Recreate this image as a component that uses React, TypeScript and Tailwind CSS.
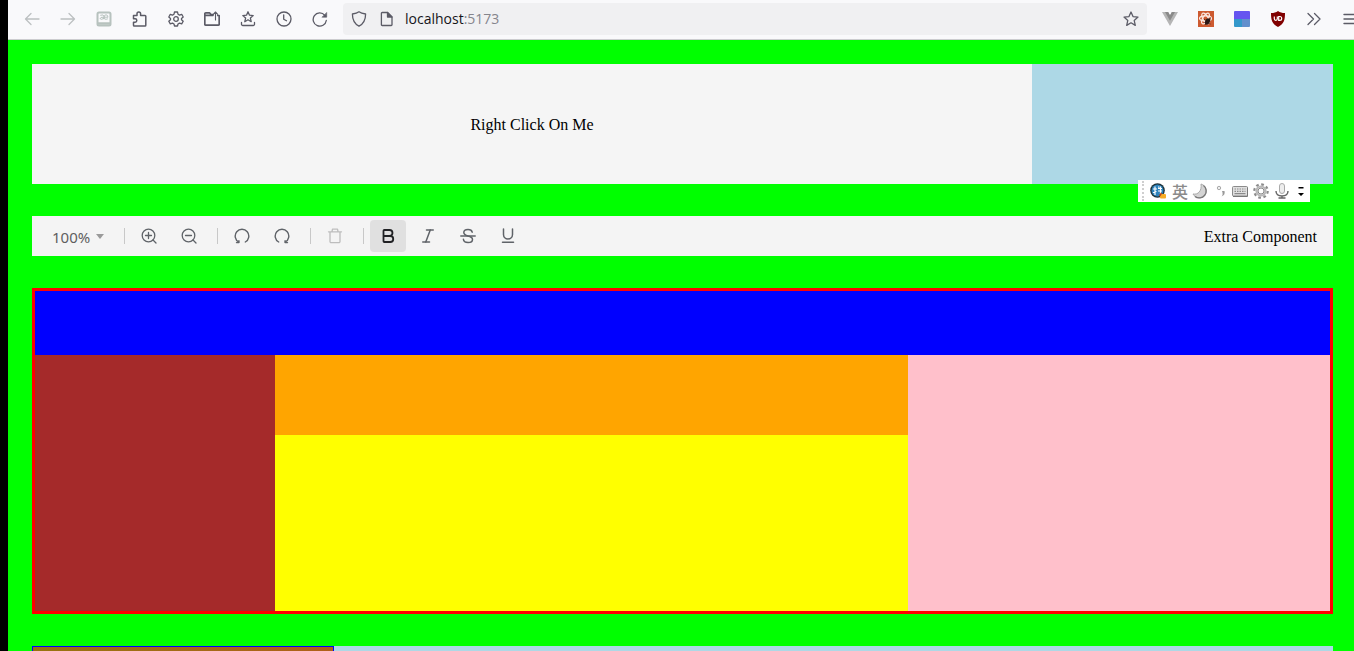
import type { ReactNode } from "react";
import { Bold, Italic } from "lucide-react";

type IconProps = { children: ReactNode; width?: number };

function Icon({ children, width = 1.3 }: IconProps) {
  return (
    <svg
      viewBox="0 0 16 16"
      className="size-4"
      fill="none"
      stroke="currentColor"
      strokeWidth={width}
      strokeLinecap="round"
      strokeLinejoin="round"
      aria-hidden="true"
    >
      {children}
    </svg>
  );
}

const star = "M8 1l2 4.6 5 .5-3.8 3.3 1.1 5L8 11.8l-4.3 2.6 1.1-5L1 6.1l5-.5z";

function NavButton({ label, muted = false, children }: { label: string; muted?: boolean; children: ReactNode }) {
  return (
    <button
      type="button"
      aria-label={label}
      className={`flex h-8 w-9 shrink-0 items-center justify-center ${muted ? "text-[#bcc0c1]" : "text-[#5b5b66]"}`}
    >
      {children}
    </button>
  );
}

function BrowserBar() {
  return (
    <header className="flex h-10 shrink-0 items-start border-b border-[#cccccf] bg-[#f9f9fb] pt-[3px] pl-1.5">
      <NavButton label="Back" muted>
        <Icon><path d="M15 8H1.500M7 2.500L1.500 8 7 13.500" /></Icon>
      </NavButton>
      <NavButton label="Forward" muted>
        <Icon><path d="M1 8h13.500M9 2.500L14.500 8 9 13.500" /></Icon>
      </NavButton>
      <NavButton label="Dictionary" muted>
        <svg viewBox="0 0 16 16" className="size-4" fill="none" stroke="#b7c2be" aria-hidden="true">
          <rect x="1.5" y="1.5" width="13" height="13" rx="1.5" strokeWidth="2" />
          <path d="M2 12.500h12" strokeWidth="2.500" />
          <path d="M4.300 4.300q3.400-1.200 3.700 1v3M8 6.200q-4-.2-4 1.300 1 1.800 4-.2M8 6.200h4q-.2-2.400-2-2.400T8 6.200q.3 3 3.800 1.600" strokeWidth="1" />
        </svg>
      </NavButton>
      <NavButton label="Extensions">
        <Icon width={1.5}>
          <path d="M1.500 4.500H5V2.800a1.800 1.800 0 013.600 0v1.700H13a.8.8 0 01.8.8v8.900a.8.8 0 01-.8.8H2.300a.8.8 0 01-.8-.8v-3h1.600a1.700 1.700 0 000-3.400H1.500z" />
        </Icon>
      </NavButton>
      <NavButton label="Settings">
        <Icon>
          <path d="M6.500 1h3l.5 2.200 1.500.9 2.200-.8 1.500 2.700-1.700 1.500v1.200l1.700 1.500-1.500 2.700-2.200-.8-1.500.9-.5 2h-3L6 13l-1.500-.9-2.200.8L.8 10.200l1.700-1.500V7.500L.8 6l1.500-2.700 2.200.8L6 3.200z" />
          <circle cx="8" cy="8" r="2.300" />
        </Icon>
      </NavButton>
      <NavButton label="Open file">
        <Icon width={1.7}>
          <path d="M9 3.500H7L5.500 1.800H1.800a1 1 0 00-1 1v10.400a1 1 0 001 1h12.400a1 1 0 001-1V4.500h-1.400M1 4.300h8" />
          <path d="M11.500 9V1M9.300 3.300L11.500 1l2.200 2.300" strokeWidth="1.1" />
        </Icon>
      </NavButton>
      <NavButton label="Bookmarks">
        <Icon>
          <path d="M8 .8l1.500 3.400 3.700.4-2.800 2.500.8 3.600L8 8.800l-3.200 1.900.8-3.600-2.800-2.500 3.700-.4z" />
          <path d="M1.500 11.500v1.700a1.300 1.300 0 001.300 1.300h10.400a1.300 1.300 0 001.300-1.300v-1.700" />
        </Icon>
      </NavButton>
      <NavButton label="History">
        <Icon><circle cx="8" cy="8" r="7" /><path d="M7.700 3.800v4.400l2.800 1.600" /></Icon>
      </NavButton>
      <NavButton label="Reload">
        <Icon>
          <path d="M14.300 9.500A6.600 6.600 0 1112.800 4.300" />
          <path d="M14.700 1.800v4.400h-4.400z" fill="currentColor" strokeWidth=".6" />
        </Icon>
      </NavButton>
      <div className="ml-[5px] flex h-8 min-w-0 flex-1 items-center rounded bg-[#f0f0f2] pl-2 text-[#5b5b66]">
        <Icon><path d="M8 .8c2 1.500 4.300 1.900 6.600 2.200 0 5.500-1.800 9.700-6.600 12.200C3.200 12.700 1.400 8.500 1.400 3 3.700 2.700 6 2.300 8 .8z" /></Icon>
        <span className="ml-3">
          <Icon>
            <path d="M3.200 1.500h5.300l4.500 4.500v7.700a.8.8 0 01-.8.8h-9a.8.8 0 01-.8-.8V2.300a.8.8 0 01.8-.8z" />
            <path d="M8.500 1.500V6H13z" fill="currentColor" />
          </Icon>
        </span>
        <a href="#" className="ml-2.5 font-['Open_Sans',sans-serif] text-sm text-[#15141a]">
          localhost<span className="text-[#85858c]">:5173</span>
        </a>
        <button type="button" aria-label="Bookmark this page" className="ml-auto flex size-8 items-center justify-center">
          <Icon><path d={star} /></Icon>
        </button>
      </div>
      <div className="-mr-[14px] ml-[5px] flex shrink-0">
        <NavButton label="Vue devtools">
          <svg viewBox="0 0 16 16" className="size-4" aria-hidden="true">
            <path d="M0 1h6l2 3.500L10 1h6L8 15z" fill="#b5b5b5" />
            <path d="M3 1h3.200L8 4.200 9.800 1H13L8 9.700z" fill="#8a8a8a" />
          </svg>
        </NavButton>
        <NavButton label="React devtools">
          <svg viewBox="0 0 16 16" className="size-4" aria-hidden="true">
            <path d="M0 0h16v16H0z" fill="#cd5a30" />
            <g fill="none" stroke="#fbe9e2" strokeWidth="1.2">
              <ellipse cx="7.5" cy="7.5" rx="6" ry="2.6" />
              <ellipse cx="7.5" cy="7.5" rx="6" ry="2.6" transform="rotate(60 7.5 7.5)" />
              <ellipse cx="7.5" cy="7.5" rx="6" ry="2.6" transform="rotate(120 7.5 7.5)" />
            </g>
            <ellipse cx="9.5" cy="10.5" rx="2.3" ry="3.4" fill="#2a1714" transform="rotate(25 9.5 10.5)" />
            <path d="M6 8l6.500 5M12.500 6.500L7 14M6.500 11.500l6-2.500" stroke="#2a1714" strokeWidth=".7" />
          </svg>
        </NavButton>
        <NavButton label="Color tools">
          <svg viewBox="0 0 16 16" className="size-4" aria-hidden="true">
            <path d="M1 0h14a1 1 0 011 1v7H0V1a1 1 0 011-1z" fill="#6554f0" />
            <path d="M0 8h8v8H1a1 1 0 01-1-1z" fill="#3498cb" />
            <path d="M8 8h8v7a1 1 0 01-1 1H8z" fill="#628fcd" />
          </svg>
        </NavButton>
        <NavButton label="Content blocker">
          <svg viewBox="0 0 16 16" className="size-4" aria-hidden="true">
            <path d="M8 0c2 1.500 4 2 7 2 0 7-1 11-7 14C2 13 1 9 1 2c3 0 5-.5 7-2z" fill="#800000" />
            <path d="M4.300 5.500v2.300a1.500 1.500 0 003 0V5.500M8.700 5.500v3.800h1.100a1.900 1.900 0 000-3.800z" fill="none" stroke="#fff" strokeWidth="1.2" />
          </svg>
        </NavButton>
        <NavButton label="More tools">
          <Icon><path d="M2 2.500L7.500 8 2 13.500M8.500 2.500L14 8l-5.500 5.500" /></Icon>
        </NavButton>
        <NavButton label="Menu">
          <Icon width={1.4}><path d="M2 3.500h12M2 8h12M2 12.500h12" /></Icon>
        </NavButton>
      </div>
    </header>
  );
}

function ToolButton({ label, state = "normal", children }: { label: string; state?: "normal" | "active" | "disabled"; children: ReactNode }) {
  const tone = {
    normal: "text-[#5f6368]",
    active: "bg-[#e0e0e0] text-[#202124]",
    disabled: "text-[#bdbdbd]",
  }[state];
  return (
    <button
      type="button"
      aria-label={label}
      aria-pressed={state === "active"}
      disabled={state === "disabled"}
      className={`mr-1 flex h-8 w-9 shrink-0 items-center justify-center rounded-sm ${tone}`}
    >
      {children}
    </button>
  );
}

function Divider() {
  return <span className="mx-1.5 h-4 w-px shrink-0 bg-[#c8c8c8]" />;
}

function Toolbar() {
  return (
    <div role="toolbar" aria-label="Editor tools" className="mt-8 flex h-10 items-center bg-[#f4f4f4] pr-4 pl-3">
      <button type="button" className="mr-1 flex h-8 w-[70px] items-center gap-1.5 px-2 font-['Noto_Sans',sans-serif] text-[15px] text-[#5f5f5f]">
        <span className="pt-0.5">100%</span>
        <svg viewBox="0 0 8 5" className="h-[5px] w-2 shrink-0" aria-hidden="true">
          <path d="M0 0h8L4 5z" fill="#9a9a9a" />
        </svg>
      </button>
      <Divider />
      <ToolButton label="Zoom in">
        <Icon><circle cx="7.5" cy="7.5" r="6.3" /><path d="M12 12l3 3M4.500 7.500h6M7.500 4.500v6" /></Icon>
      </ToolButton>
      <ToolButton label="Zoom out">
        <Icon><circle cx="7.5" cy="7.5" r="6.3" /><path d="M12 12l3 3M4.500 7.500h6" /></Icon>
      </ToolButton>
      <Divider />
      <ToolButton label="Undo">
        <Icon width={1.4}><path d="M11.300 14A6.800 6.800 0 10 4.700 14" /><path d="M2.500 14.600h2.400v-1.800" /></Icon>
      </ToolButton>
      <ToolButton label="Redo">
        <Icon width={1.4}><path d="M4.700 14A6.800 6.800 0 11 11.300 14" /><path d="M13.500 14.600h-2.400v-1.800" /></Icon>
      </ToolButton>
      <Divider />
      <ToolButton label="Delete" state="disabled">
        <Icon><path d="M1.500 3.800h13M5 3.500l.5-2.300h5l.5 2.300M3 4v9.500a1.200 1.200 0 001.200 1.200h7.600A1.200 1.200 0 0013 13.500V4" /></Icon>
      </ToolButton>
      <Divider />
      <ToolButton label="Bold" state="active">
        <Bold className="size-[18px]" strokeWidth={2.4} />
      </ToolButton>
      <ToolButton label="Italic">
        <Italic className="size-[18px]" strokeWidth={2} />
      </ToolButton>
      <ToolButton label="Strikethrough">
        <Icon width={1.5}>
          <path d="M.8 8h14.400" />
          <path d="M12.200 4.200C11.800 2.300 10.200 1.500 8 1.500c-2.500 0-4.200 1.200-4.200 3.100C3.800 6.500 5.300 7.300 8 8c3 .7 4.500 1.500 4.500 3.400s-1.800 3.100-4.400 3.100c-2.800 0-4.500-1.100-4.700-3.200" />
        </Icon>
      </ToolButton>
      <ToolButton label="Underline">
        <Icon width={1.5}>
          <path d="M3.500 1v5.500a4.500 4.500 0 009 0V1" />
          <path d="M2.500 14.200h11" />
        </Icon>
      </ToolButton>
      <span className="ml-auto pt-0.5">Extra Component</span>
    </div>
  );
}

function InputMethodBar() {
  return (
    <div className="absolute top-[180px] right-11 flex h-[22px] w-[172px] items-center bg-white text-[#8b8b8b]">
      <span className="ml-1 h-5 border-l-2 border-dotted border-[#cfcfcf]" />
      <svg viewBox="0 0 16 16" className="ml-1.5 size-4 shrink-0" aria-hidden="true">
        <circle cx="7.5" cy="7.5" r="7.3" fill="#1d3037" />
        <circle cx="7.5" cy="7.5" r="6" fill="#2d83bd" />
        <path d="M3 6h4M5 3.500v8.500M3 9.500l3.500-1M8 5.500h4M8 8h4M10.500 3.500V11M8.500 3.500l.7 1.200" stroke="#fff" strokeWidth="1.2" fill="none" />
        <rect x="10" y="11" width="6" height="4.5" rx="1" fill="#f7ac25" />
        <path d="M9.500 13l2-3" stroke="#b5441a" strokeWidth="1.5" />
      </svg>
      <span className="ml-1.5 w-4 shrink-0 font-['Noto_Sans_CJK_SC',sans-serif] text-base leading-5 font-medium">英</span>
      <svg viewBox="0 0 16 16" className="ml-1 size-4 shrink-0" aria-hidden="true">
        <path d="M9 1a7 7 0 11-8 10c5 1 9-3 8-10z" fill="#d4d4d4" stroke="#aaa" />
        <path d="M11.500 2.500A6.800 6.800 0 013 13.500" fill="none" stroke="#777" strokeWidth="1.3" />
      </svg>
      <svg viewBox="0 0 16 16" className="ml-1 size-4 shrink-0" aria-hidden="true">
        <circle cx="7" cy="5" r="1.7" fill="#eee" stroke="#aaa" />
        <path d="M10 8h2.500q1 4-3 5.500 2-2 .5-5.500z" fill="#999" />
      </svg>
      <svg viewBox="0 0 16 16" className="ml-1 size-4 shrink-0" fill="none" stroke="currentColor" aria-hidden="true">
        <rect x=".5" y="3.5" width="15" height="9.5" rx="1" fill="#e0e0e0" />
        <path d="M2.500 6h11M2.500 8.300h11" strokeWidth="1.2" strokeDasharray="1.5 1" />
        <path d="M2.500 10.700h11M1 13.500h14.500V4.500" stroke="#777" />
      </svg>
      <svg viewBox="0 0 16 16" className="ml-[5px] size-4 shrink-0" fill="none" stroke="currentColor" aria-hidden="true">
        <circle cx="8" cy="8" r="6.7" strokeWidth="2.2" strokeDasharray="2.7 2.56" />
        <circle cx="8" cy="8" r="4.5" strokeWidth="2.2" stroke="#b8b8b8" />
        <circle cx="8" cy="8" r="3" />
      </svg>
      <svg viewBox="0 0 16 16" className="ml-[5px] size-4 shrink-0" fill="none" stroke="#666" aria-hidden="true">
        <rect x="5.5" y=".5" width="5" height="10" rx="2.5" fill="#eee" stroke="#aaa" />
        <path d="M2 8q0 5 6 5t6-5M8 13v2M4.500 15h7" strokeWidth="1.4" />
      </svg>
      <svg viewBox="0 0 6 12" className="ml-2 h-3 w-1.5 shrink-0" aria-hidden="true">
        <path d="M.5 2h5v1.500h-5zM0 8h6l-3 3z" fill="#000" />
      </svg>
    </div>
  );
}

export default function App() {
  return (
    <div className="relative flex h-screen flex-col overflow-hidden border-l-8 border-black bg-[#00ff00] font-['Liberation_Serif',serif] text-base text-black">
      <BrowserBar />
      <main className="pt-6 pr-[21px] pl-6">
        <section className="flex h-[120px]">
          <div className="flex flex-1 items-center justify-center bg-[#f5f5f5] pt-0.5">Right Click On Me</div>
          <div className="w-[301px] bg-[#add8e6]" />
        </section>
        <Toolbar />
        <section className="mt-8 border-[3px] border-[#ff0000]">
          <div className="h-16 bg-[#0000ff]" />
          <div className="flex h-64">
            <div className="w-60 bg-[#a52a2a]" />
            <div className="flex flex-[3] flex-col">
              <div className="h-20 bg-[#ffa500]" />
              <div className="flex-1 bg-[#ffff00]" />
            </div>
            <div className="flex-[2] bg-[#ffc0cb]" />
          </div>
        </section>
        <section className="mt-8 flex h-32 bg-[#add8e6]">
          <div className="w-[302px] border border-[#0000ff] bg-linear-to-r from-[#97740f] to-[#b0601a]" />
        </section>
      </main>
      <InputMethodBar />
    </div>
  );
}
